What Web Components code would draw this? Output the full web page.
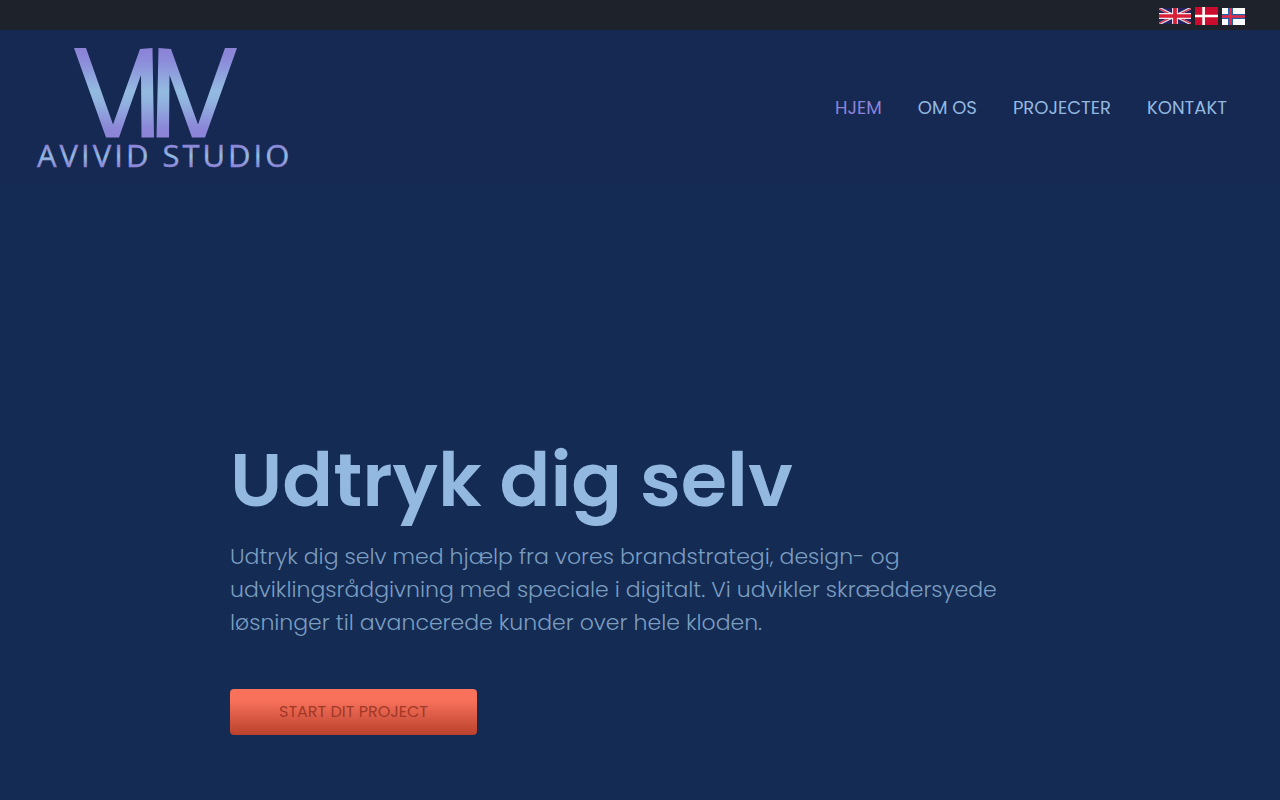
<!DOCTYPE html>
<html lang="da">
<head>
<meta charset="utf-8">
<meta name="viewport" content="width=device-width, initial-scale=1">
<title>Avivid Studio</title>
<style>
  body { margin: 0; background: #142b54; color: #94b9e0; font-family: Poppins, Inter, sans-serif; }
</style>
</head>
<body>
<avivid-page>
  <language-bar slot="top"></language-bar>
  <site-header slot="header">
    <site-logo slot="logo"></site-logo>
    <nav-link href="#hjem" current>HJEM</nav-link>
    <nav-link href="#om-os">OM OS</nav-link>
    <nav-link href="#projecter">PROJECTER</nav-link>
    <nav-link href="#kontakt">KONTAKT</nav-link>
  </site-header>
  <hero-section>
    <span slot="title">Udtryk dig selv</span>
    Udtryk dig selv med hjælp fra vores brandstrategi, design- og udviklingsrådgivning med speciale i digitalt. Vi udvikler skræddersyede løsninger til avancerede kunder over hele kloden.
    <action-button slot="action">START DIT PROJECT</action-button>
  </hero-section>
</avivid-page>
<script>
const define = (name, html, setup) => customElements.define(name, class extends HTMLElement {
  connectedCallback() {
    if (this.shadowRoot) return;
    this.attachShadow({ mode: 'open' }).innerHTML = html;
    if (setup) setup(this, this.shadowRoot);
  }
});

define('avivid-page', `
  <style>:host { display: block; } main { display: block; }</style>
  <slot name="top"></slot>
  <slot name="header"></slot>
  <main><slot></slot></main>`);

define('language-bar', `
  <style>
    :host { display: flex; justify-content: flex-end; align-items: center; gap: 4px; height: 30px; padding: 0 35px; background: #1e222a; box-sizing: border-box; }
    a, svg { display: block; }
    a { padding-top: 2px; }
  </style>
  <a href="#en" aria-label="English"><svg width="32" height="16" viewBox="0 0 60 30">
    <path fill="#262262" d="M0 0h60v30H0z"/>
    <path stroke="#dcdcea" stroke-width="5" d="M0 0l60 30M60 0L0 30"/>
    <path stroke="#d81f36" stroke-width="2" d="M0 1l28 14M60 1L32 15M0 29l28-14M60 29L32 15"/>
    <path stroke="#f0e6ee" stroke-width="11" d="M30 0v30M0 15h60"/>
    <path stroke="#d81f36" stroke-width="7" d="M30 0v30M0 15h60"/>
  </svg></a>
  <a href="#da" aria-label="Dansk"><svg width="23" height="18" viewBox="0 0 23 18">
    <path fill="#ca0c2e" d="M0 0h23v18H0z"/><path stroke="#fff" stroke-width="2.6" d="M8.6 0v18M0 9h23"/>
  </svg></a>
  <a href="#fo" aria-label="Føroyskt"><svg width="23" height="17" viewBox="0 0 23 17">
    <path fill="#fff" d="M0 0h23v17H0z"/>
    <path stroke="#1c62ae" stroke-width="5" d="M8.500 0v17M0 8.500h23"/>
    <path stroke="#e52b43" stroke-width="2.6" d="M8.500 0v17M0 8.500h23"/>
  </svg></a>`);

define('site-header', `
  <style>
    :host { display: flex; justify-content: space-between; align-items: center; min-height: 155px; padding: 0 35px; background: #162953; box-sizing: border-box; }
    nav { display: flex; }
  </style>
  <slot name="logo"></slot>
  <nav><slot></slot></nav>`);

define('site-logo', `
  <style>:host, a, svg { display: block; } text { font-family: "Open Sans", sans-serif; font-size: 31px; font-weight: 500; letter-spacing: 3px; }</style>
  <a href="#hjem" aria-label="Avivid Studio">
    <svg width="262" height="138" viewBox="0 -6 262 138">
      <defs>
        <linearGradient id="mark" gradientUnits="userSpaceOnUse" x1="0" y1="4" x2="0" y2="92">
          <stop offset="0" stop-color="#8c83d7"/><stop offset=".12" stop-color="#8c8ad9"/><stop offset=".48" stop-color="#93bbe1"/><stop offset=".6" stop-color="#91b3df"/><stop offset=".9" stop-color="#8c87d8"/><stop offset="1" stop-color="#8c83d7"/>
        </linearGradient>
        <linearGradient id="word" gradientUnits="userSpaceOnUse" x1="0" y1="100" x2="0" y2="122">
          <stop offset="0" stop-color="#8c83d7"/><stop offset=".5" stop-color="#94bde1"/><stop offset="1" stop-color="#8c83d7"/>
        </linearGradient>
      </defs>
      <g fill="url(#mark)">
        <path d="M39 3H51L78 79.500 105 4 117.500 3 119 92.500H106.500L106 30 84 92.500H71Z"/>
        <path d="M123.500 3L136 4 163 79.500 190 3H202L170 92.500H157L134.500 30 134 92.500H121.500Z"/>
      </g>
      <text x="2" y="122" fill="url(#word)" stroke="url(#word)" stroke-width=".4">AVIVID STUDIO</text>
    </svg>
  </a>`);

define('nav-link', `
  <style>
    :host { display: block; }
    a { display: block; padding: 0 18px; font-size: 18px; line-height: 28px; color: #94b9e0; text-decoration: none; white-space: nowrap; }
    :host([current]) a { color: #8c83d9; }
  </style>
  <a><slot></slot></a>`, (host, root) => {
    const a = root.querySelector('a');
    a.href = host.getAttribute('href');
    if (host.hasAttribute('current')) a.setAttribute('aria-current', 'page');
  });

define('hero-section', `
  <style>
    :host { display: block; max-width: 820px; margin: 0 auto; padding: 240px 20px 65px; }
    h1 { margin: 0; font-size: 75px; line-height: 110px; font-weight: 600; }
    p { margin: 5px 0 50px; font-size: 22px; line-height: 33px; font-weight: 300; color: #7b9dc0; }
  </style>
  <h1><slot name="title"></slot></h1>
  <p><slot></slot></p>
  <slot name="action"></slot>`);

define('action-button', `
  <style>
    :host { display: block; }
    button { display: block; height: 46px; padding: 0 49px; border: 0; border-radius: 4px; background: linear-gradient(#f8715b 25%, #b9412c); color: #a03828; font: 400 16px/24px Poppins, Inter, sans-serif; cursor: pointer; }
  </style>
  <button type="button"><slot></slot></button>`);
</script>
</body>
</html>
